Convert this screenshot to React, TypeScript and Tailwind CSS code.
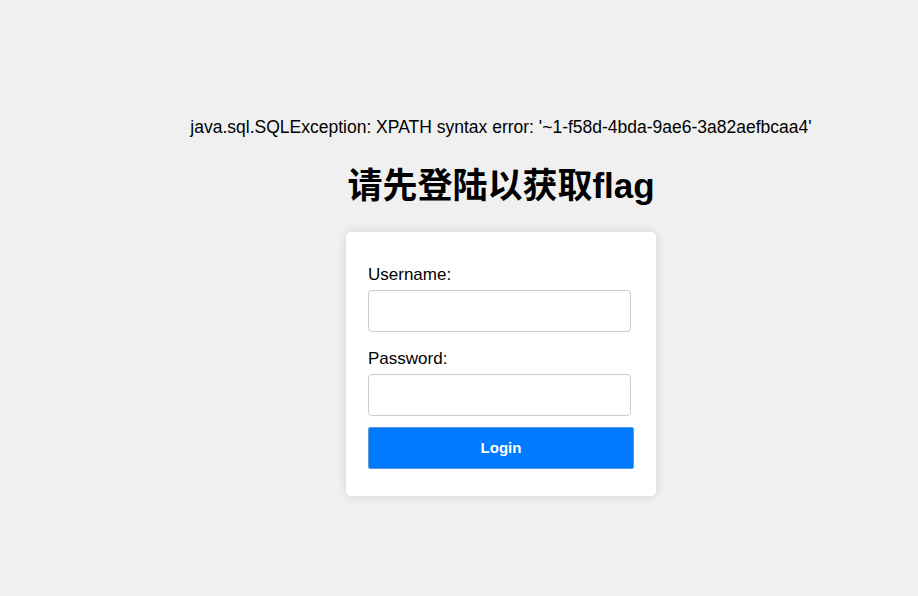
export default function App() {
  return (
    <div className="min-h-[596px] w-full bg-[#f0f0f0] pl-[84px] font-['Liberation_Sans',Arial,sans-serif] text-black">
      <div className="flex flex-col items-center pt-[116px]">
        <p className="text-[17.5px] leading-[22px]">java.sql.SQLException: XPATH syntax error: '~1-f58d-4bda-9ae6-3a82aefbcaa4'</p>
        <h1 className="mt-[26px] font-['Liberation_Sans','Noto_Sans_CJK_SC',sans-serif] text-[35px] font-bold leading-[44px]">请先登陆以获取flag</h1>
        <form className="mt-[24px] w-[310px] rounded-[5px] bg-white pb-[27px] pl-[22px] pt-[33px] shadow-[0_0_10px_rgba(0,0,0,0.12)]">
          <label className="block text-[17px] leading-[20px]">Username:</label>
          <input type="text" className="mt-[5px] block h-[42px] w-[263px] rounded-[4px] border border-[#cccccc] bg-white outline-none" />
          <label className="mt-[17px] block text-[17px] leading-[20px]">Password:</label>
          <input type="password" className="mt-[5px] block h-[42px] w-[263px] rounded-[4px] border border-[#cccccc] bg-white outline-none" />
          <button type="button" className="mt-[11px] block h-[42px] w-[266px] rounded-[2px] border border-[#5d9be0] bg-[#007bff] text-[15px] font-bold text-white">Login</button>
        </form>
      </div>
    </div>
  );
}
